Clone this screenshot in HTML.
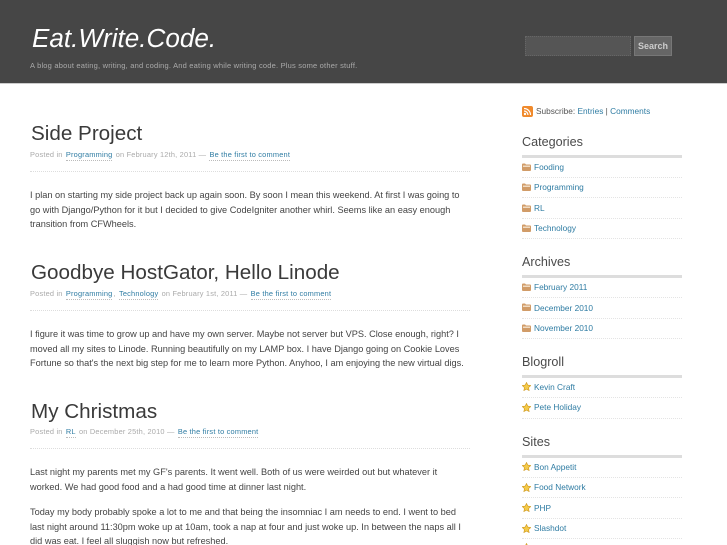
<!DOCTYPE html>
<html><head><meta charset="utf-8"><style>
html,body{margin:0;padding:0;width:727px;height:545px;overflow:hidden;background:#fff;font-family:"Liberation Sans",sans-serif}
#w{position:absolute;left:0;top:0;width:727px;height:545px;overflow:hidden;filter:blur(.3px)}
.a{position:absolute;white-space:nowrap}
a{color:#2f7ca3;text-decoration:none}
.t{left:31px;font-size:20.650px;color:#3a3a3a;line-height:26px}
.m{left:30px;font-size:7.400px;color:#aaa;line-height:12px;letter-spacing:.2px}
.m a{border-bottom:1px dotted #bbb;padding-bottom:1px;margin:0 1px}
.p{left:30px;font-size:9.200px;color:#444;line-height:14.600px}
.r{left:30px;width:440px;height:0;border-top:1px dotted #ddd}
.h{left:522px;font-size:12.600px;color:#4a4a4a;line-height:18px}
.b{left:522px;width:160px;height:3px;background:#ddd}
.l{left:522px;width:160px;height:0;border-top:1px dotted #e4e4e4}
.s{left:534px;font-size:8.300px;line-height:12px}
svg.fo{position:absolute;left:522px;width:9px;height:8px}
svg.st{position:absolute;left:522px;width:9px;height:9px}
</style></head><body><div id="w">
<div class="a" style="left:0;top:0;width:727px;height:83px;background:#464646;border-bottom:1px solid #ccc"></div>
<div class="a" style="left:32px;top:22px;font-size:26.100px;line-height:33px;font-style:italic;color:#fff">Eat.Write.Code.</div>
<div class="a" style="left:30px;top:60px;font-size:7.500px;line-height:11px;color:#aaa;letter-spacing:.2px">A blog about eating, writing, and coding. And eating while writing code. Plus some other stuff.</div>
<div class="a" style="left:525px;top:36px;width:104px;height:18px;background:#555;border:1px dotted #666"></div>
<div class="a" style="left:634px;top:36px;width:36px;height:18px;background:#666;border:1px solid #777;color:#ccc;font-size:9px;font-weight:bold;text-align:center;line-height:18px">Search</div>

<div class="a t" style="top:121px">Side Project</div>
<div class="a m" style="top:148.500px">Posted in <a>Programming</a> on February 12th, 2011 — <a>Be the first to comment</a></div>
<div class="a r" style="top:171px"></div>
<div class="a p" style="top:188px">I plan on starting my side project back up again soon. By soon I mean this weekend. At first I was going to<br>go with Django/Python for it but I decided to give CodeIgniter another whirl. Seems like an easy enough<br>transition from CFWheels.</div>

<div class="a t" style="top:260px">Goodbye HostGator, Hello Linode</div>
<div class="a m" style="top:287.500px">Posted in <a>Programming</a>, <a>Technology</a> on February 1st, 2011 — <a>Be the first to comment</a></div>
<div class="a r" style="top:310px"></div>
<div class="a p" style="top:327px">I figure it was time to grow up and have my own server. Maybe not server but VPS. Close enough, right? I<br>moved all my sites to Linode. Running beautifully on my LAMP box. I have Django going on Cookie Loves<br>Fortune so that's the next big step for me to learn more Python. Anyhoo, I am enjoying the new virtual digs.</div>

<div class="a t" style="top:398.500px">My Christmas</div>
<div class="a m" style="top:425.500px">Posted in <a>RL</a> on December 25th, 2010 — <a>Be the first to comment</a></div>
<div class="a r" style="top:448px"></div>
<div class="a p" style="top:465px">Last night my parents met my GF's parents. It went well. Both of us were weirded out but whatever it<br>worked. We had good food and a had good time at dinner last night.</div>
<div class="a p" style="top:505px">Today my body probably spoke a lot to me and that being the insomniac I am needs to end. I went to bed<br>last night around 11:30pm woke up at 10am, took a nap at four and just woke up. In between the naps all I<br>did was eat. I feel all sluggish now but refreshed.</div>

<svg class="a" style="left:522px;top:106px" width="11" height="11" viewBox="0 0 11 11"><rect width="11" height="11" rx="2" fill="#f08a2c"/><circle cx="3" cy="8" r="1.2" fill="#fff"/><path d="M2 5a4 4 0 0 1 4 4M2 2.500A6.500 6.500 0 0 1 8.500 9" stroke="#fff" stroke-width="1.200" fill="none"/></svg>
<div class="a s" style="top:105px;left:536px;color:#555">Subscribe: <a>Entries</a> | <a>Comments</a></div>

<div class="a h" style="top:133px">Categories</div><div class="a b" style="top:155px"></div>
<svg class="fo" style="top:163px" viewBox="0 0 9 8"><path d="M0 1.500Q0 .5 1 .5H3L4 1.500H8Q9 1.500 9 2.500V7Q9 8 8 8H1Q0 8 0 7Z" fill="#d19c68"/><rect x="1" y="2.500" width="7" height="1.500" fill="#f0dcc4"/></svg><div class="a s" style="top:161px"><a>Fooding</a></div><div class="a l" style="top:177px"></div>
<svg class="fo" style="top:183px" viewBox="0 0 9 8"><path d="M0 1.500Q0 .5 1 .5H3L4 1.500H8Q9 1.500 9 2.500V7Q9 8 8 8H1Q0 8 0 7Z" fill="#d19c68"/><rect x="1" y="2.500" width="7" height="1.500" fill="#f0dcc4"/></svg><div class="a s" style="top:181px"><a>Programming</a></div><div class="a l" style="top:197px"></div>
<svg class="fo" style="top:204px" viewBox="0 0 9 8"><path d="M0 1.500Q0 .5 1 .5H3L4 1.500H8Q9 1.500 9 2.500V7Q9 8 8 8H1Q0 8 0 7Z" fill="#d19c68"/><rect x="1" y="2.500" width="7" height="1.500" fill="#f0dcc4"/></svg><div class="a s" style="top:202px"><a>RL</a></div><div class="a l" style="top:218px"></div>
<svg class="fo" style="top:224px" viewBox="0 0 9 8"><path d="M0 1.500Q0 .5 1 .5H3L4 1.500H8Q9 1.500 9 2.500V7Q9 8 8 8H1Q0 8 0 7Z" fill="#d19c68"/><rect x="1" y="2.500" width="7" height="1.500" fill="#f0dcc4"/></svg><div class="a s" style="top:222px"><a>Technology</a></div><div class="a l" style="top:238px"></div>

<div class="a h" style="top:253px">Archives</div><div class="a b" style="top:275px"></div>
<svg class="fo" style="top:283px" viewBox="0 0 9 8"><path d="M0 1.500Q0 .5 1 .5H3L4 1.500H8Q9 1.500 9 2.500V7Q9 8 8 8H1Q0 8 0 7Z" fill="#d19c68"/><rect x="1" y="2.500" width="7" height="1.500" fill="#f0dcc4"/></svg><div class="a s" style="top:281px"><a>February 2011</a></div><div class="a l" style="top:297px"></div>
<svg class="fo" style="top:303px" viewBox="0 0 9 8"><path d="M0 1.500Q0 .5 1 .5H3L4 1.500H8Q9 1.500 9 2.500V7Q9 8 8 8H1Q0 8 0 7Z" fill="#d19c68"/><rect x="1" y="2.500" width="7" height="1.500" fill="#f0dcc4"/></svg><div class="a s" style="top:302px"><a>December 2010</a></div><div class="a l" style="top:318px"></div>
<svg class="fo" style="top:324px" viewBox="0 0 9 8"><path d="M0 1.500Q0 .5 1 .5H3L4 1.500H8Q9 1.500 9 2.500V7Q9 8 8 8H1Q0 8 0 7Z" fill="#d19c68"/><rect x="1" y="2.500" width="7" height="1.500" fill="#f0dcc4"/></svg><div class="a s" style="top:322px"><a>November 2010</a></div><div class="a l" style="top:338px"></div>

<div class="a h" style="top:353px">Blogroll</div><div class="a b" style="top:375px"></div>
<svg class="st" style="top:382px" viewBox="0 0 10 10"><path d="M5 .5 6.400 3.400 9.700 3.900 7.300 6.200 7.900 9.500 5 7.900 2.100 9.500 2.700 6.200.3 3.900 3.600 3.400Z" fill="#f5cb4a" stroke="#d09a20" stroke-width=".7"/></svg><div class="a s" style="top:381px"><a>Kevin Craft</a></div><div class="a l" style="top:397px"></div>
<svg class="st" style="top:403px" viewBox="0 0 10 10"><path d="M5 .5 6.400 3.400 9.700 3.900 7.300 6.200 7.900 9.500 5 7.900 2.100 9.500 2.700 6.200.3 3.900 3.600 3.400Z" fill="#f5cb4a" stroke="#d09a20" stroke-width=".7"/></svg><div class="a s" style="top:401px"><a>Pete Holiday</a></div><div class="a l" style="top:418px"></div>

<div class="a h" style="top:433px">Sites</div><div class="a b" style="top:455px"></div>
<svg class="st" style="top:462px" viewBox="0 0 10 10"><path d="M5 .5 6.400 3.400 9.700 3.900 7.300 6.200 7.900 9.500 5 7.900 2.100 9.500 2.700 6.200.3 3.900 3.600 3.400Z" fill="#f5cb4a" stroke="#d09a20" stroke-width=".7"/></svg><div class="a s" style="top:461px"><a>Bon Appetit</a></div><div class="a l" style="top:477px"></div>
<svg class="st" style="top:483px" viewBox="0 0 10 10"><path d="M5 .5 6.400 3.400 9.700 3.900 7.300 6.200 7.900 9.500 5 7.900 2.100 9.500 2.700 6.200.3 3.900 3.600 3.400Z" fill="#f5cb4a" stroke="#d09a20" stroke-width=".7"/></svg><div class="a s" style="top:481px"><a>Food Network</a></div><div class="a l" style="top:497px"></div>
<svg class="st" style="top:503px" viewBox="0 0 10 10"><path d="M5 .5 6.400 3.400 9.700 3.900 7.300 6.200 7.900 9.500 5 7.900 2.100 9.500 2.700 6.200.3 3.900 3.600 3.400Z" fill="#f5cb4a" stroke="#d09a20" stroke-width=".7"/></svg><div class="a s" style="top:502px"><a>PHP</a></div><div class="a l" style="top:518px"></div>
<svg class="st" style="top:524px" viewBox="0 0 10 10"><path d="M5 .5 6.400 3.400 9.700 3.900 7.300 6.200 7.900 9.500 5 7.900 2.100 9.500 2.700 6.200.3 3.900 3.600 3.400Z" fill="#f5cb4a" stroke="#d09a20" stroke-width=".7"/></svg><div class="a s" style="top:522px"><a>Slashdot</a></div><div class="a l" style="top:538px"></div>
<svg class="st" style="top:543px" viewBox="0 0 10 10"><path d="M5 .5 6.400 3.400 9.700 3.900 7.300 6.200 7.900 9.500 5 7.900 2.100 9.500 2.700 6.200.3 3.900 3.600 3.400Z" fill="#f5cb4a" stroke="#d09a20" stroke-width=".7"/></svg>
</div></body></html>
